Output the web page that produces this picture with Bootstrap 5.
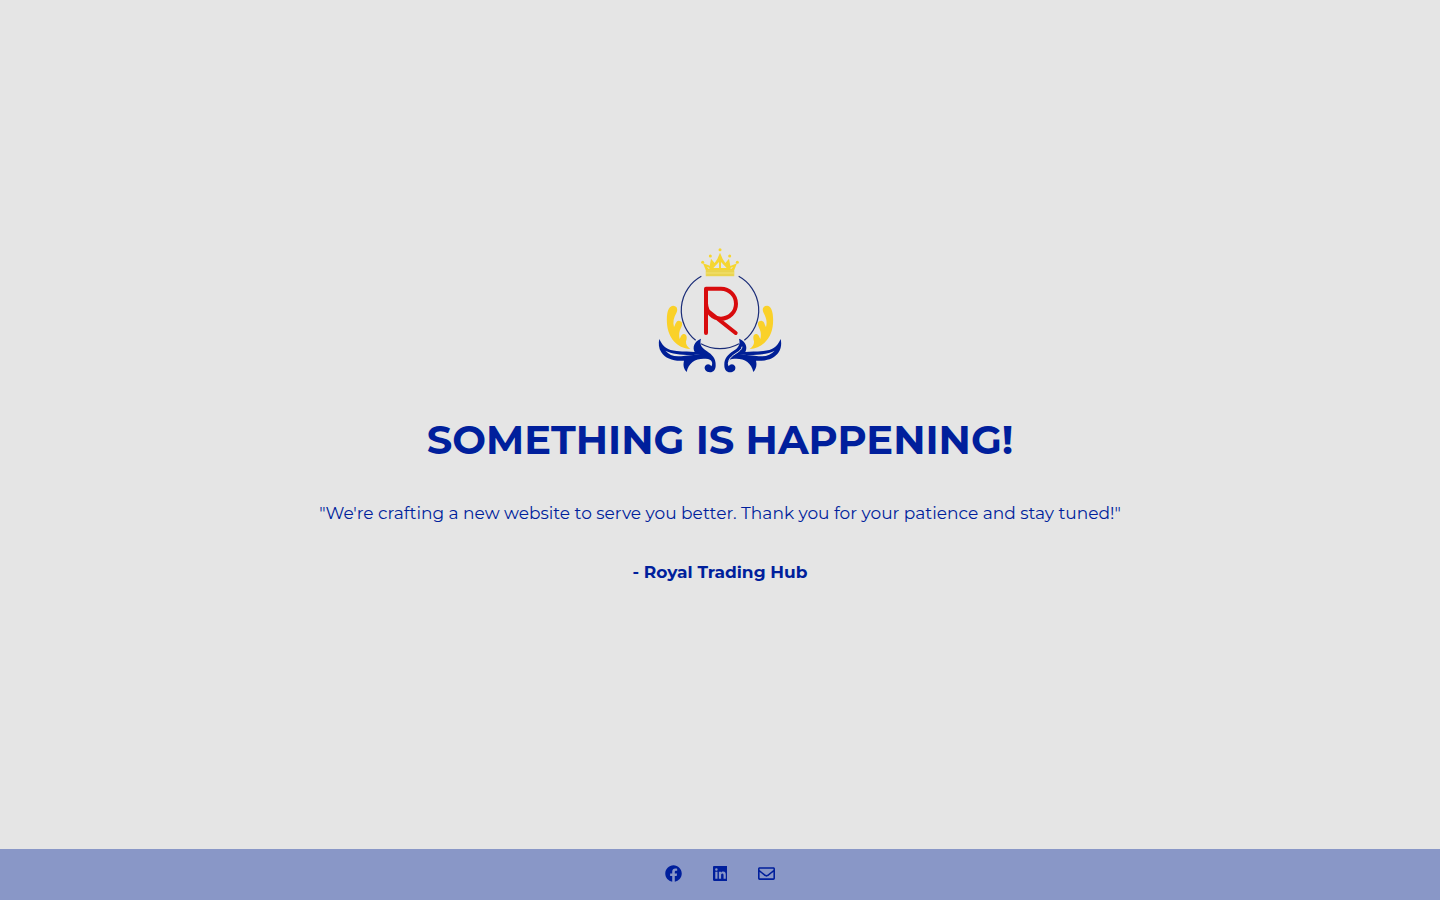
<!DOCTYPE html>
<html lang="en">
<head>
<meta charset="utf-8">
<meta name="viewport" content="width=device-width, initial-scale=1">
<title>Royal Trading Hub</title>
<link href="https://cdn.jsdelivr.net/npm/bootstrap@5.3.0/dist/css/bootstrap.min.css" rel="stylesheet">
<style>
  :root { --royal: #001f9c; }
  body { background: #e5e5e5; color: var(--royal); font-family: Montserrat, Inter, "Open Sans", sans-serif; font-size: 17px; line-height: 26px; }
  .crest { width: 140px; height: 140px; }
  .headline { font-size: 40px; line-height: 48px; margin: 36px 0; }
  .message { margin-bottom: 33px; }
  .social-bar { background: #8997c7; min-height: 51px; gap: 31px; padding-bottom: 2px; }
  .social-bar a { color: var(--royal); }
  .social-bar svg { display: block; height: 17px; fill: currentColor; }
</style>
</head>
<body class="d-flex flex-column min-vh-100">
<main class="flex-grow-1 d-flex flex-column align-items-center justify-content-center text-center px-3 pb-4">
  <svg class="crest" viewBox="0 0 420 420" role="img" aria-label="Royal Trading Hub crest">
    <!-- ring -->
    <g fill="none" stroke="#1b2d78" stroke-width="3.6">
      <path d="M154 109A116 116 0 0 0 137 301"/>
      <path d="M266 109A116 116 0 0 1 283 301"/>
      <path d="M153 311A116 116 0 0 0 267 311"/>
    </g>
    <!-- monogram -->
    <path d="M168 279V146H213A45 45 0 0 1 213 236C188 236 169 216 168 190M170 210L257 279" fill="none" stroke="#d80b0d" stroke-width="12" stroke-linecap="round" stroke-linejoin="round"/>
    <!-- crown -->
    <g fill="#f5d631">
      <path fill-rule="evenodd" d="M168 92L159 70L176 76L179 78L183 56L194 69L202 57L210 38L218 57L226 69L237 56L241 78L261 70L252 92ZM190 84L207 84V66ZM213 66V84L230 84ZM171 80L180 85L175 86ZM249 80L240 85L245 86Z"/>
      <rect x="167" y="91" width="86" height="18" rx="2" fill="#eedb62"/>
      <circle cx="210" cy="29" r="4.5"/><circle cx="181" cy="48" r="4.5"/><circle cx="239" cy="48" r="4.5"/>
      <circle cx="158" cy="67" r="4.5"/><circle cx="262" cy="67" r="4.5"/>
    </g>
    <path d="M168 93H252M169 105H251" fill="none" stroke="#e3c52b" stroke-width="2"/>
    <g id="side">
      <path d="M121 327C80 324 54 292 51 251C49 218 55 198 69 197C81 197 85 208 79 219C71 233 68 247 72 261C76 255 77 243 86 242C97 242 99 253 93 263C87 274 86 285 89 297C93 289 95 281 103 282C112 284 111 296 108 304C107 313 112 321 121 327Z" fill="#fad129"/>
      <path d="M28 297C39 321 53 331 80 333C103 335 119 335 134 336C127 322 132 304 153 296C148 314 155 323 170 333C187 344 198 356 197 376C197 390 190 397 180 397C168 397 161 387 165 379C169 370 180 371 184 379C190 370 185 359 174 357C143 352 116 364 110 396C103 388 98 378 102 362C72 365 46 356 34 337C26 325 25 310 28 297Z" fill="#001f96"/>
      <path d="M46 332C70 344 109 347 151 344C119 344 104 348 88 349C70 350 56 343 46 332Z" fill="#e5e5e5"/>
    </g>
    <use href="#side" transform="translate(420 0) scale(-1 1)"/>
    <path d="M276 320C276 337 241 342 236 364" fill="none" stroke="#e5e5e5" stroke-width="3"/>
  </svg>
  <h1 class="headline fw-bold">SOMETHING IS HAPPENING!</h1>
  <p class="message">"We're crafting a new website to serve you better. Thank you for your patience and stay tuned!"</p>
  <p class="fw-bold mb-0">- Royal Trading Hub</p>
</main>
<footer class="social-bar d-flex align-items-center justify-content-center">
  <a href="#" aria-label="Facebook"><svg viewBox="0 0 512 512"><path d="M504 256C504 119 393 8 256 8S8 119 8 256c0 123.800 90.700 226.400 209.300 245V327.700h-63V256h63v-54.600c0-62.200 37-96.500 93.700-96.500 27.100 0 55.500 4.800 55.500 4.800v61h-31.300c-30.800 0-40.400 19.100-40.400 38.700V256h68.800l-11 71.700h-57.800V501C413.300 482.400 504 379.800 504 256z"/></svg></a>
  <a href="#" aria-label="LinkedIn"><svg viewBox="0 0 448 512"><path d="M416 32H31.900C14.300 32 0 46.500 0 64.300v383.400C0 465.500 14.300 480 31.900 480H416c17.600 0 32-14.500 32-32.300V64.300c0-17.800-14.400-32.300-32-32.300zM135.400 416H69V202.200h66.500V416zM102.200 173a38.500 38.500 0 1 1 0-77 38.500 38.500 0 0 1 0 77zM384.300 416h-66.400V312c0-24.800-.5-56.700-34.500-56.700-34.600 0-39.900 27-39.900 54.900V416h-66.400V202.200h63.700v29.200h.9c8.900-16.800 30.600-34.500 62.900-34.500 67.200 0 79.700 44.300 79.700 101.900V416z"/></svg></a>
  <a href="#" aria-label="Email"><svg viewBox="0 0 512 512"><path d="M464 64H48C21.500 64 0 85.500 0 112v288c0 26.500 21.500 48 48 48h416c26.500 0 48-21.500 48-48V112c0-26.500-21.500-48-48-48zm0 48v40.800c-22.400 18.300-58.200 46.700-134.600 106.500-16.800 13.200-50.200 45.100-73.400 44.700-23.200.4-56.600-31.500-73.400-44.700C106.200 199.500 70.400 171.100 48 152.800V112h416zM48 400V214.400c22.900 18.300 55.400 43.900 104.900 82.600 21.900 17.200 60.100 55.200 103.100 55 42.700.2 80.500-37.200 103.100-54.900 49.500-38.800 82-64.400 104.900-82.700V400H48z"/></svg></a>
</footer>
<script src="https://cdn.jsdelivr.net/npm/bootstrap@5.3.0/dist/js/bootstrap.bundle.min.js"></script>
</body>
</html>
